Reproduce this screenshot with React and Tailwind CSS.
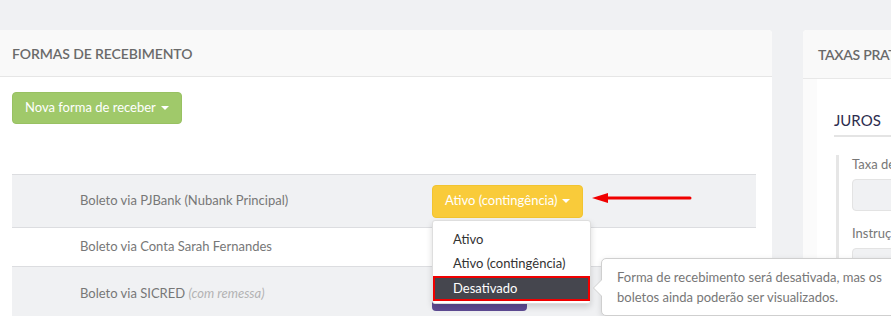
import React from "react";

const font = { fontFamily: "Lato, 'Open Sans', sans-serif" };

function Caret() {
  return (
    <span className="inline-block ml-[5px] align-middle w-0 h-0 border-l-[4px] border-r-[4px] border-t-[4px] border-l-transparent border-r-transparent border-t-white" />
  );
}

export default function App() {
  return (
    <div
      className="relative w-[891px] h-[316px] overflow-hidden bg-[#f0f1f3] pt-[30px] flex gap-[31px]"
      style={font}
    >
      {/* Left card */}
      <div className="w-[772px] shrink-0 bg-white rounded-tr-[4px] flex flex-col">
        <div className="h-[47px] bg-[#f9f9f9] border-b border-[#e6e6e6] px-3 flex items-center rounded-tr-[4px]">
          <span className="text-[14px] font-semibold text-[#6a6a6a] tracking-[-0.1px]">
            FORMAS DE RECEBIMENTO
          </span>
        </div>
        <div className="px-3 pt-[15px]">
          <button className="h-[32px] px-[12px] rounded-[4px] bg-[#a0c96a] border border-[#98c162] text-white text-[13px] flex items-center">
            Nova forma de receber
            <Caret />
          </button>
          <div className="mt-[50px] w-[744px]">
            <div className="h-[53px] bg-[#f0f1f3] border-t border-[#dcdde0] flex items-center">
              <div className="w-[420px] pl-[68px] text-[13px] text-[#777]">
                Boleto via PJBank (Nubank Principal)
              </div>
              <button className="h-[33px] px-[12px] rounded-[4px] bg-[#f9cb3a] border border-[#f2c430] text-white text-[13px] flex items-center">
                Ativo (contingência)
                <Caret />
              </button>
            </div>
            <div className="h-[39px] bg-white border-t border-[#dcdde0] flex items-center">
              <div className="w-[420px] pl-[68px] text-[13px] text-[#777]">
                Boleto via Conta Sarah Fernandes
              </div>
            </div>
            <div className="h-[50px] bg-[#f0f1f3] border-t border-[#dcdde0] flex items-start">
              <div className="w-[420px] pl-[68px] pt-[17px] text-[13px] text-[#777]">
                Boleto via SICRED{" "}
                <span className="italic text-[#b3b3b3]">(com remessa)</span>
              </div>
              <div className="mt-[12px] w-[95px] h-[32px] rounded-[4px] bg-[#5e4b93]" />
            </div>
          </div>
        </div>
      </div>

      {/* Right card */}
      <div className="flex-1 bg-white rounded-tl-[4px] flex flex-col">
        <div className="h-[49px] bg-[#f9f9f9] border-b border-[#e8e8e8] pl-[15px] flex items-center rounded-tl-[4px] whitespace-nowrap">
          <span className="text-[14px] font-semibold text-[#6a6a6a] tracking-[-0.3px]">TAXAS PRATICADAS</span>
        </div>
        <div className="flex-1 bg-[#fbfbfb] pl-[14px]">
          <div className="h-full bg-white pl-[17px] pt-[30px] whitespace-nowrap">
            <div className="text-[15px] text-[#2c2c4e] pb-[3px] border-b-2 border-[#e4e4e4] w-[200px]">
              JUROS
            </div>
            <div className="mt-[18px] ml-[2px] border-l-[3px] border-[#e6e6e6] pl-[13px] pt-[1px]">
              <div className="text-[13px] text-[#777] leading-[17px]">Taxa de juros</div>
              <div className="mt-[6px] h-[32px] w-[200px] rounded-[4px] bg-[#f0f1f3] border border-[#e3e3e3]" />
              <div className="mt-[14px] text-[13px] text-[#777] leading-[17px]">Instruções</div>
              <div className="mt-[6px] h-[32px] w-[200px] rounded-[4px] bg-[#f0f1f3] border border-[#e3e3e3] pl-[18px] pt-[6px] text-[13px] text-[#999]">
                Exibir
              </div>
            </div>
          </div>
        </div>
      </div>

      {/* Dropdown menu */}
      <div className="absolute left-[432px] top-[220px] w-[159px] bg-white border border-[#dedede] rounded-[3px] shadow-[0_3px_6px_rgba(0,0,0,0.15)] pt-[7px] pb-[2px]">
        <div className="h-[24px] pl-[20px] flex items-center text-[13px] text-[#333]">Ativo</div>
        <div className="h-[24px] pl-[20px] flex items-center text-[13px] text-[#333]">
          Ativo (contingência)
        </div>
        <div className="h-[25px] pl-[18px] flex items-center text-[13px] text-white bg-[#45464e] border-2 border-[#f00000]">
          Desativado
        </div>
      </div>

      {/* Red arrow */}
      <svg className="absolute left-[590px] top-[192px]" width="104" height="12" viewBox="0 0 104 12">
        <line x1="12" y1="6" x2="100" y2="6" stroke="#f00000" strokeWidth="3" strokeLinecap="round" />
        <polygon points="2,6 18,1 18,11" fill="#f00000" />
      </svg>

      {/* Tooltip */}
      <div className="absolute left-[601px] top-[258px] w-[320px] h-[58px] bg-white border border-[#cfcfcf] rounded-[5px] shadow-[0_2px_6px_rgba(0,0,0,0.12)] pl-[15px] pt-[8px] text-[13px] leading-[20px] text-[#777]">
        <div className="absolute -left-[9px] top-[20px] w-0 h-0 border-t-[9px] border-b-[9px] border-r-[9px] border-t-transparent border-b-transparent border-r-[#cfcfcf]" />
        <div className="absolute -left-[8px] top-[20px] w-0 h-0 border-t-[9px] border-b-[9px] border-r-[9px] border-t-transparent border-b-transparent border-r-white" />
        <div>Forma de recebimento será desativada, mas os</div>
        <div>boletos ainda poderão ser visualizados.</div>
      </div>
    </div>
  );
}
